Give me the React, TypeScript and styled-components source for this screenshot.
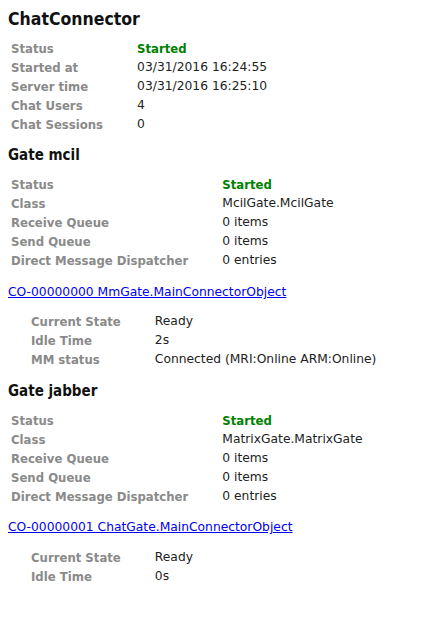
import React from "react";
import styled, { createGlobalStyle } from "styled-components";

const Global = createGlobalStyle`
  html, body { margin: 0; padding: 0; background: #fff; }
  body { padding: 8px; font-family: "DejaVu Sans", Verdana, sans-serif; color: #222; }
`;

const Page = styled.div`
  display: flex;
  flex-direction: column;
`;

const Title = styled.h1`
  margin: 0;
  font-family: "DejaVu Sans Condensed", "DejaVu Sans", sans-serif;
  font-size: 17.5px;
  line-height: 22px;
  font-weight: bold;
  color: #111;
`;

const SectionTitle = styled.h2`
  margin: 0;
  font-family: "DejaVu Sans Condensed", "DejaVu Sans", sans-serif;
  font-size: 15px;
  line-height: 20px;
  font-weight: bold;
  color: #111;
`;

const Grid = styled.div<{ $indent?: number; $top: number; $bottom: number }>`
  display: grid;
  grid-template-columns: max-content 1fr;
  grid-auto-rows: 19px;
  align-items: center;
  column-gap: 34px;
  padding: ${(p) => p.$top}px 0 ${(p) => p.$bottom}px ${(p) => 3 + (p.$indent ?? 0)}px;
  font-size: 12.3px;
  line-height: 19px;
`;

const Label = styled.div`
  font-family: "DejaVu Sans Condensed", "DejaVu Sans", sans-serif;
  font-size: 13px;
  font-weight: bold;
  color: #8a8a8a;
  white-space: nowrap;
`;

const Value = styled.div<{ $ok?: boolean }>`
  white-space: nowrap;
  color: ${(p) => (p.$ok ? "#008000" : "#222")};
  font-weight: ${(p) => (p.$ok ? "bold" : "normal")};
  font-family: ${(p) =>
    p.$ok ? '"DejaVu Sans Condensed", "DejaVu Sans", sans-serif' : '"DejaVu Sans", sans-serif'};
  font-size: ${(p) => (p.$ok ? "13px" : "12.3px")};
`;

const Link = styled.a`
  font-size: 12.3px;
  line-height: 19px;
  color: #0000ee;
  text-decoration: underline;
`;

type Row = [string, string, boolean?];

const Table = ({ rows, indent, top, bottom }: { rows: Row[]; indent?: number; top: number; bottom: number }) => (
  <Grid $indent={indent} $top={top} $bottom={bottom}>
    {rows.map(([l, v, ok]) => (
      <React.Fragment key={l}>
        <Label>{l}</Label>
        <Value $ok={ok}>{v}</Value>
      </React.Fragment>
    ))}
  </Grid>
);

export default function App() {
  return (
    <Page>
      <Global />
      <Title>ChatConnector</Title>
      <Table
        top={9}
        bottom={11}
        rows={[
          ["Status", "Started", true],
          ["Started at", "03/31/2016 16:24:55"],
          ["Server time", "03/31/2016 16:25:10"],
          ["Chat Users", "4"],
          ["Chat Sessions", "0"],
        ]}
      />
      <SectionTitle>Gate mcil</SectionTitle>
      <Table
        top={10}
        bottom={11}
        rows={[
          ["Status", "Started", true],
          ["Class", "McilGate.McilGate"],
          ["Receive Queue", "0 items"],
          ["Send Queue", "0 items"],
          ["Direct Message Dispatcher", "0 entries"],
        ]}
      />
      <div>
        <Link href="#">CO-00000000 MmGate.MainConnectorObject</Link>
      </div>
      <Table
        indent={20}
        top={10}
        bottom={12}
        rows={[
          ["Current State", "Ready"],
          ["Idle Time", "2s"],
          ["MM status", "Connected (MRI:Online ARM:Online)"],
        ]}
      />
      <SectionTitle>Gate jabber</SectionTitle>
      <Table
        top={10}
        bottom={10}
        rows={[
          ["Status", "Started", true],
          ["Class", "MatrixGate.MatrixGate"],
          ["Receive Queue", "0 items"],
          ["Send Queue", "0 items"],
          ["Direct Message Dispatcher", "0 entries"],
        ]}
      />
      <div>
        <Link href="#">CO-00000001 ChatGate.MainConnectorObject</Link>
      </div>
      <Table
        indent={20}
        top={11}
        bottom={11}
        rows={[
          ["Current State", "Ready"],
          ["Idle Time", "0s"],
        ]}
      />
    </Page>
  );
}
